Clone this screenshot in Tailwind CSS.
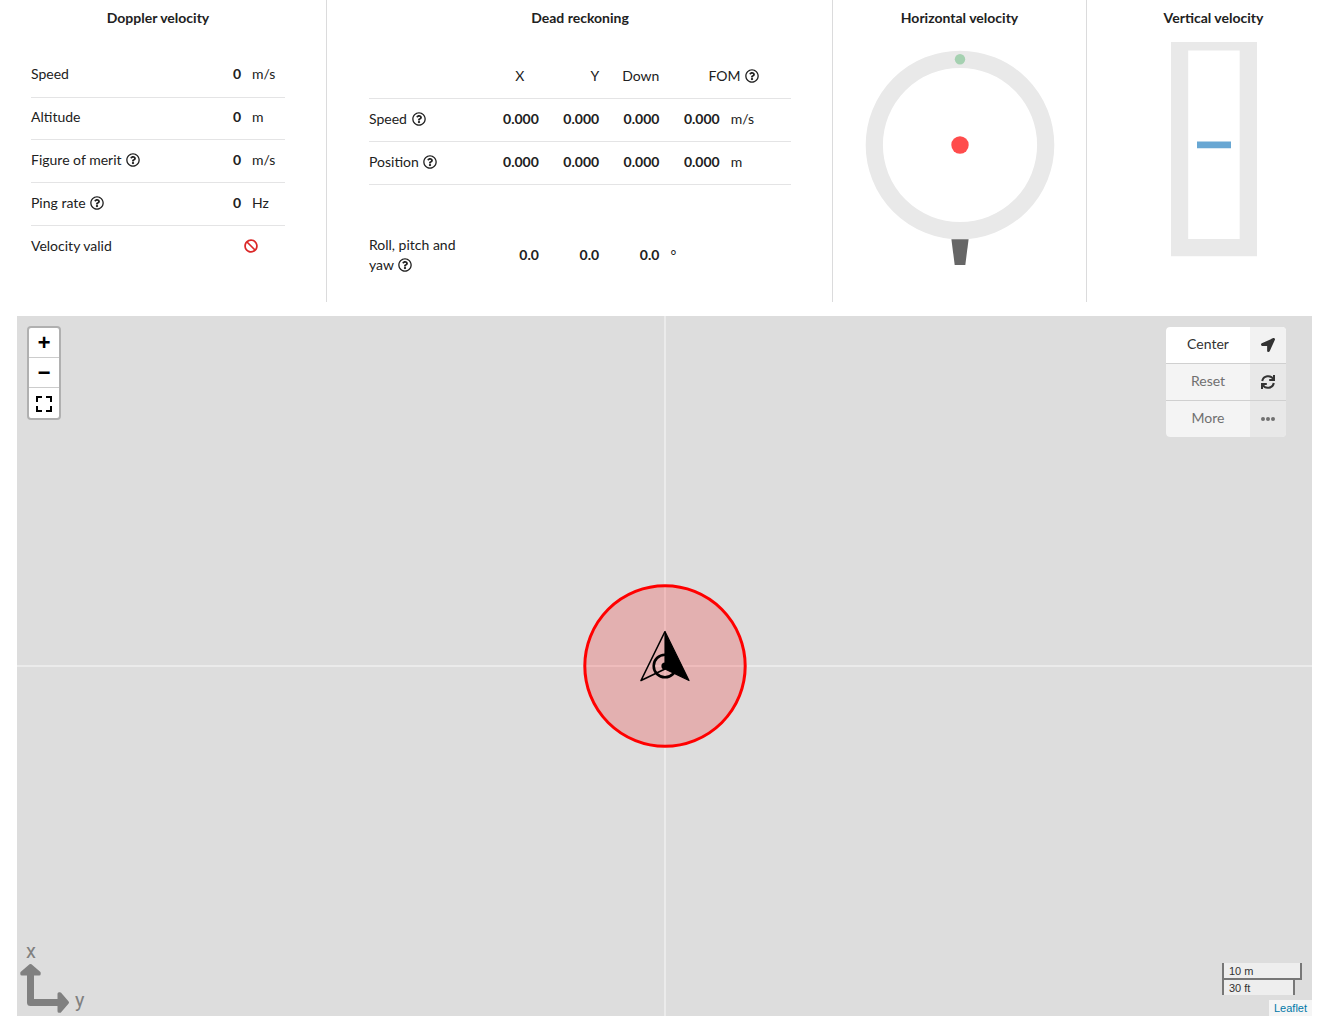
<!DOCTYPE html>
<html lang="en">
<head>
<meta charset="utf-8">
<meta name="viewport" content="width=device-width, initial-scale=1">
<title>Doppler velocity log</title>
<script src="https://cdn.jsdelivr.net/npm/@tailwindcss/browser@4"></script>
</head>
<body class="overflow-x-hidden bg-white font-['Lato',sans-serif] text-sm/5 text-[#212121]">
<svg class="hidden" aria-hidden="true">
  <symbol id="help" viewBox="0 0 512 512"><path fill="currentColor" d="M256 8C119.043 8 8 119.083 8 256c0 136.997 111.043 248 248 248s248-111.003 248-248C504 119.083 392.957 8 256 8zm0 448c-110.532 0-200-89.431-200-200 0-110.495 89.472-200 200-200 110.491 0 200 89.471 200 200 0 110.53-89.431 200-200 200zm107.244-255.2c0 67.052-72.421 68.084-72.421 92.863V300c0 6.627-5.373 12-12 12h-45.647c-6.627 0-12-5.373-12-12v-8.659c0-35.745 27.1-50.034 47.579-61.516 17.561-9.845 28.324-16.541 28.324-29.579 0-17.246-21.999-28.693-39.784-28.693-23.189 0-33.894 10.977-48.942 29.969-4.057 5.12-11.46 6.071-16.666 2.124l-27.824-21.098c-5.107-3.872-6.251-11.066-2.644-16.363C184.846 131.491 214.94 112 261.794 112c49.071 0 101.45 38.304 101.45 88.8zM298 368c0 23.159-18.841 42-42 42s-42-18.841-42-42 18.841-42 42-42 42 18.841 42 42z"/></symbol>
</svg>

<main>
  <section class="-mx-[10px] grid grid-cols-[337fr_506fr_254fr_253fr]">
    <div class="border-r border-[#dbdbdc] px-[41px] pt-2">
      <h2 class="text-center font-bold">Doppler velocity</h2>
      <table class="mt-[26px] w-full table-fixed border-collapse">
        <colgroup><col><col class="w-9"><col class="w-[33px]"></colgroup>
        <tbody class="[&_td]:pb-[2px] [&_th]:pb-[2px] [&_th]:text-left [&_th]:font-normal">
          <tr class="h-[43px] border-b border-[#e4e4e5]"><th scope="row">Speed</th><td class="pr-[11px] text-right font-bold">0</td><td>m/s</td></tr>
          <tr class="h-[42px] border-b border-[#e4e4e5]"><th scope="row">Altitude</th><td class="pr-[11px] text-right font-bold">0</td><td>m</td></tr>
          <tr class="h-[43px] border-b border-[#e4e4e5]"><th scope="row">Figure of merit <svg class="ml-px inline size-[14px] align-[-2px]"><use href="#help"/></svg></th><td class="pr-[11px] text-right font-bold">0</td><td>m/s</td></tr>
          <tr class="h-[43px] border-b border-[#e4e4e5]"><th scope="row">Ping rate <svg class="ml-px inline size-[14px] align-[-2px]"><use href="#help"/></svg></th><td class="pr-[11px] text-right font-bold">0</td><td>Hz</td></tr>
          <tr class="h-[43px]"><th scope="row">Velocity valid</th><td colspan="2"><svg class="mx-auto size-[14px] text-[#db2828]" viewBox="0 0 512 512" role="img" aria-label="Not valid"><path fill="currentColor" d="M256 8C119.034 8 8 119.033 8 256s111.034 248 248 248 248-111.034 248-248S392.967 8 256 8zm130.108 117.892c65.448 65.448 70 165.481 20.677 235.637L150.47 105.216c70.204-49.356 170.226-44.735 235.638 20.676zM125.892 386.108c-65.448-65.448-70-165.481-20.677-235.637L361.53 406.784c-70.203 49.356-170.226 44.736-235.638-20.676z"/></svg></td></tr>
        </tbody>
      </table>
    </div>

    <div class="border-r border-[#dbdbdc] px-[41px] pt-2 pl-[42px]">
      <h2 class="text-center font-bold">Dead reckoning</h2>
      <table class="mt-[27px] w-full table-fixed border-collapse">
        <colgroup><col class="w-2/7"><col><col><col><col><col></colgroup>
        <thead class="[&_th]:font-normal">
          <tr class="h-[43px] border-b border-[#e4e4e5]"><td></td><th scope="col">X</th><th scope="col" class="pr-[11px] text-right">Y</th><th scope="col" class="pr-[11px] text-right">Down</th><th scope="col" colspan="2" class="pl-[6px]">FOM <svg class="ml-px inline size-[14px] align-[-2px]"><use href="#help"/></svg></th></tr>
        </thead>
        <tbody class="[&_td]:pb-[2px] [&_th]:pr-[11px] [&_th]:pb-[2px] [&_th]:text-left [&_th]:font-normal">
          <tr class="h-[43px] border-b border-[#e4e4e5]"><th scope="row">Speed <svg class="ml-px inline size-[14px] align-[-2px]"><use href="#help"/></svg></th><td class="pr-[11px] text-right font-bold">0.000</td><td class="pr-[11px] text-right font-bold">0.000</td><td class="pr-[11px] text-right font-bold">0.000</td><td class="pr-[11px] text-right font-bold">0.000</td><td>m/s</td></tr>
          <tr class="h-[43px] border-b border-[#e4e4e5]"><th scope="row">Position <svg class="ml-px inline size-[14px] align-[-2px]"><use href="#help"/></svg></th><td class="pr-[11px] text-right font-bold">0.000</td><td class="pr-[11px] text-right font-bold">0.000</td><td class="pr-[11px] text-right font-bold">0.000</td><td class="pr-[11px] text-right font-bold">0.000</td><td>m</td></tr>
          <tr class="h-[118px] [&>*]:pt-[25px]"><th scope="row">Roll, pitch and yaw <svg class="ml-px inline size-[14px] align-[-2px]"><use href="#help"/></svg></th><td class="pr-[11px] text-right font-bold">0.0</td><td class="pr-[11px] text-right font-bold">0.0</td><td class="pr-[11px] text-right font-bold">0.0</td><td>°</td><td></td></tr>
        </tbody>
      </table>
    </div>

    <div class="border-r border-[#dbdbdc] pt-2">
      <h2 class="text-center font-bold">Horizontal velocity</h2>
      <svg class="mx-auto mt-[14px] h-[240px] w-[214px]" viewBox="-107 -103 214 240">
        <circle r="85.7" fill="none" stroke="#e9e9e9" stroke-width="17.2"/>
        <circle cy="-85.8" r="5.2" fill="#a5d1b1"/>
        <circle r="8.7" fill="#ff4c4c"/>
        <path d="M-8.6 94.2H8.6L5.3 120H-5.3z" fill="#666"/>
      </svg>
    </div>

    <div class="pt-2">
      <h2 class="text-center font-bold">Vertical velocity</h2>
      <svg class="mx-auto mt-[14px] h-[215px] w-[86px]" viewBox="0 0 86 215">
        <path d="M0 0H86V214.3H0z" fill="#e9e9e9"/>
        <path d="M17.2 8.5H68.7V197H17.2z" fill="#fff"/>
        <path d="M26 99.4H60V106.3H26z" fill="#68a7d3"/>
      </svg>
    </div>
  </section>

  <section class="relative mt-[14px] mr-[18px] mb-[18px] ml-[17px] h-[700px] bg-[#ddd]" aria-label="Map">
    <div class="absolute inset-y-0 left-1/2 w-[2px] -translate-x-1/2 bg-[#ebebeb]"></div>
    <div class="absolute inset-x-0 top-1/2 h-[2px] -translate-y-1/2 bg-[#ebebeb]"></div>
    <svg class="absolute top-1/2 left-1/2 size-[168px] -translate-1/2" viewBox="-84 -84 168 168">
      <circle r="80.2" fill="#ff0000" fill-opacity=".2" stroke="#ff0000" stroke-width="3"/>
      <circle r="11.3" fill="none" stroke="#000" stroke-width="2.6"/>
      <circle r="3.6"/>
      <path d="M0-34.5L-24 14.5L0 3" fill="none" stroke="#000" stroke-width="1.6" stroke-linejoin="round"/>
      <path d="M0-34.5V3L24 14.5z" stroke="#000" stroke-width="1.2" stroke-linejoin="round"/>
    </svg>

    <div class="absolute top-[10px] left-[10px] flex w-[34px] flex-col overflow-hidden rounded border-2 border-black/20 bg-white bg-clip-padding font-['Liberation_Mono',monospace] text-[22px]/6 font-bold text-black">
      <button type="button" aria-label="Zoom in" class="h-[30px] border-b border-[#ccc] pt-[5px]">+</button>
      <button type="button" aria-label="Zoom out" class="h-[30px] border-b border-[#ccc] pt-[5px]">−</button>
      <button type="button" aria-label="Full screen" class="flex h-[30px] items-center justify-center"><svg class="mt-[2px] size-4" viewBox="0 0 16 16" fill="none" stroke="#000" stroke-width="2"><path d="M1 6V1H6M10 1H15V6M15 10V15H10M6 15H1V10"/></svg></button>
    </div>

    <div class="absolute top-[11px] right-[26px] flex w-[120px] flex-col gap-px overflow-hidden rounded bg-[#d0d0d0]">
      <button type="button" class="grid h-9 grid-cols-[1fr_36px] items-stretch bg-white text-[#333]"><span class="self-center pb-[2px]">Center</span><span class="flex items-center justify-center bg-[#f2f2f2]"><svg class="size-[14px]" viewBox="0 0 512 512" fill="#333"><path d="M444.52 3.52L28.74 195.42c-47.97 22.39-31.98 92.75 19.19 92.75h175.91v175.91c0 51.17 70.36 67.17 92.75 19.19l191.9-415.78c15.99-38.39-25.59-79.97-63.97-63.97z"/></svg></span></button>
      <button type="button" class="grid h-9 grid-cols-[1fr_36px] items-stretch bg-[#f4f4f4] text-[#707070]"><span class="self-center pb-[2px]">Reset</span><span class="flex items-center justify-center bg-[#e8e8e8]"><svg class="size-[14px]" viewBox="0 0 14 14" fill="none" stroke="#333" stroke-width="2"><path d="M1.2 6A6 6 0 0 1 12.3 4.2M13 0V5H8.2M12.8 8A6 6 0 0 1 1.7 9.8M1 14V9H5.8"/></svg></span></button>
      <button type="button" class="grid h-9 grid-cols-[1fr_36px] items-stretch bg-[#f4f4f4] text-[#707070]"><span class="self-center pb-[2px]">More</span><span class="flex items-center justify-center bg-[#e8e8e8]"><svg class="size-[14px]" viewBox="0 0 14 14" fill="#707070"><circle cx="2" cy="7" r="2"/><circle cx="7" cy="7" r="2"/><circle cx="12" cy="7" r="2"/></svg></span></button>
    </div>

    <div class="absolute bottom-[3px] left-[3px] grid grid-cols-[50px_auto] font-['Roboto',sans-serif] text-xl/5 text-[#808080]">
      <span class="pb-[2px] pl-[6px]">x</span><span></span>
      <svg class="size-[50px]" viewBox="0 0 50 50" fill="#808080" stroke="#808080" stroke-linejoin="round"><path d="M10.500 4V39.500H44" fill="none" stroke-width="7"/><path d="M10.500 2.500L19.200 10V11H1.800V10zM47.500 39.500L40 48.200H39V30.800H40z" stroke-width="3"/></svg>
      <span class="self-end pb-[3px] pl-[5px]">y</span>
    </div>

    <div class="absolute right-[10px] bottom-[21px] w-20 font-['Liberation_Sans',sans-serif] text-[11px]/[14px] text-[#333]">
      <div class="h-[17px] border-2 border-t-0 border-[#777] bg-white/50 pt-px pl-[5px]">10 m</div>
      <div class="h-[15px] w-[73px] border-x-2 border-[#777] bg-white/50 pt-px pl-[5px]">30 ft</div>
    </div>
    <div class="absolute right-0 bottom-0 bg-white/70 px-[5px] font-['Liberation_Sans',sans-serif] text-[11px]/4 text-[#0078a8]"><a href="#">Leaflet</a></div>
  </section>
</main>
</body>
</html>
